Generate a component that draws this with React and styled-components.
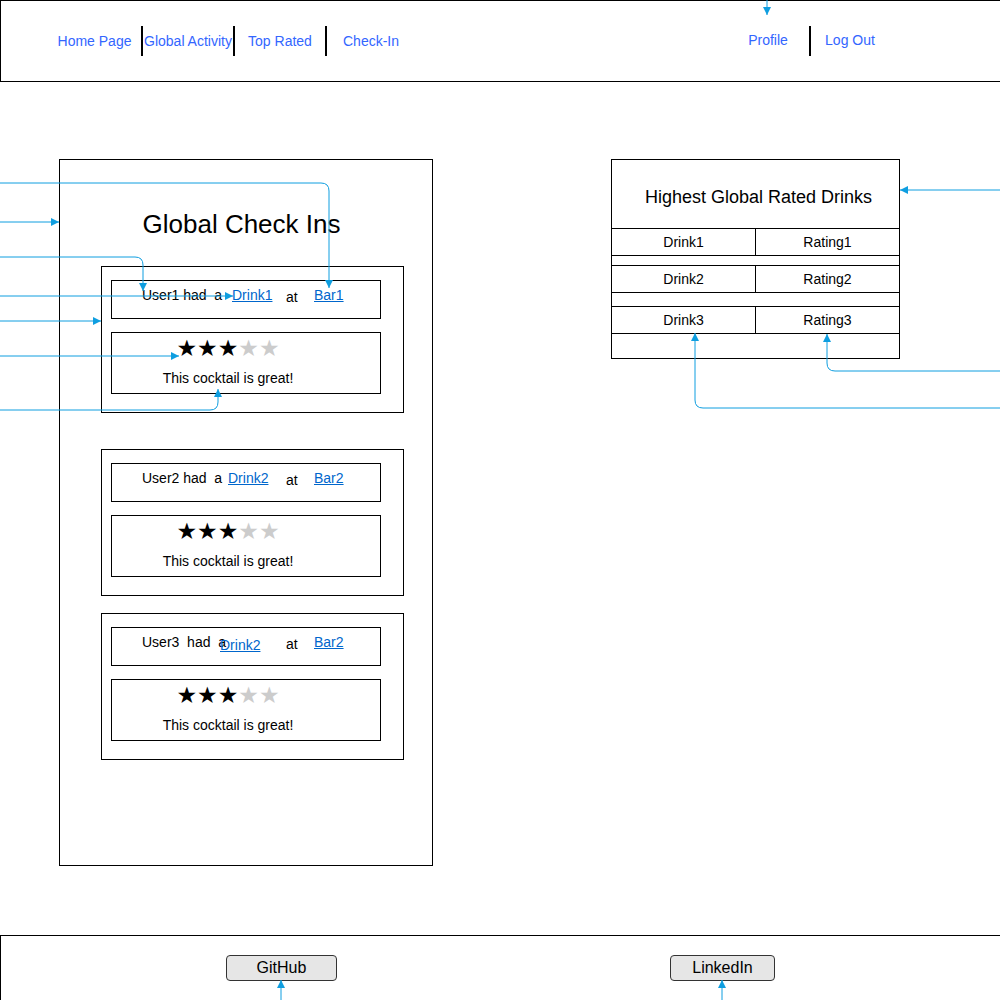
import React from 'react';
import styled, { createGlobalStyle } from 'styled-components';

const GlobalStyle = createGlobalStyle`
  body {
    margin: 0;
    font-family: "Liberation Sans", Arial, sans-serif;
    background: #ffffff;
    color: #000000;
  }
`;

const Page = styled.div`
  position: relative;
  width: 1000px;
  height: 1000px;
  overflow: hidden;
`;

const Header = styled.header`
  box-sizing: border-box;
  height: 82px;
  border: 1px solid #000;
  border-right: none;
  display: flex;
  align-items: center;
`;

const NavGroup = styled.nav`
  display: flex;
  align-items: center;
  padding-left: ${p => p.$left || 0}px;
  padding-right: ${p => p.$right || 0}px;
  margin-left: ${p => (p.$push ? 'auto' : '0')};
`;

const NavLink = styled.a`
  width: ${p => p.$w}px;
  text-align: center;
  font-size: 14px;
  color: #3366ff;
  text-decoration: none;
  white-space: nowrap;
  margin-top: ${p => p.$dy || 0}px;
`;

const NavSep = styled.span`
  width: 2px;
  height: 30px;
  background: #000;
`;

const Main = styled.main`
  box-sizing: border-box;
  height: 853px;
  display: flex;
  align-items: flex-start;
  padding: 77px 0 0 59px;
`;

const Panel = styled.section`
  box-sizing: border-box;
  width: 374px;
  height: 707px;
  border: 1px solid #000;
  padding: 49px 0 0 41px;
`;

const PanelTitle = styled.h1`
  margin: 0 0 27px;
  width: 281px;
  text-align: center;
  font-size: 26px;
  line-height: 30px;
  font-weight: 400;
  white-space: nowrap;
`;

const Card = styled.div`
  box-sizing: border-box;
  width: 303px;
  height: 147px;
  border: 1px solid #000;
  padding: 13px 0 0 9px;
  margin-bottom: ${p => p.$gap}px;
`;

const SentenceBox = styled.div`
  box-sizing: border-box;
  width: 270px;
  height: 39px;
  border: 1px solid #000;
  padding: 6px 0 0 30px;
  display: flex;
  align-items: flex-start;
  font-size: 14px;
  line-height: 16px;
  white-space: pre;
`;

const Word = styled.span`
  width: ${p => (p.$w ? `${p.$w}px` : 'auto')};
  flex-shrink: 0;
  margin-top: ${p => p.$dy || 0}px;
`;

const DrinkLink = styled.a`
  color: #0066cc;
  text-decoration: underline;
`;

const ReviewBox = styled.div`
  box-sizing: border-box;
  width: 270px;
  height: 62px;
  margin-top: 13px;
  border: 1px solid #000;
  padding: 2px 36px 0 0;
  display: flex;
  flex-direction: column;
  align-items: center;
`;

const Stars = styled.div`
  font-family: "DejaVu Sans", sans-serif;
  font-size: 23px;
  line-height: 27px;
  white-space: nowrap;
`;

const Star = styled.span`
  color: ${p => (p.$on ? '#000' : '#cccccc')};
`;

const Comment = styled.div`
  margin-top: 8px;
  font-size: 14px;
  line-height: 16px;
`;

const Table = styled.section`
  box-sizing: border-box;
  width: 289px;
  margin-left: 178px;
  border: 1px solid #000;
  display: flex;
  flex-direction: column;
`;

const TableTitle = styled.div`
  box-sizing: border-box;
  height: 69px;
  border-bottom: 1px solid #000;
  display: flex;
  align-items: center;
  justify-content: center;
  padding: 6px 0 0 6px;
  font-size: 18px;
`;

const TableRow = styled.div`
  height: 26px;
  border-bottom: 1px solid #000;
  display: grid;
  grid-template-columns: 144px 1fr;
  font-size: 14px;
`;

const Cell = styled.div`
  display: flex;
  align-items: center;
  justify-content: center;
  border-right: ${p => (p.$divider ? '1px solid #000' : 'none')};
`;

const Spacer = styled.div`
  height: ${p => p.$h}px;
  border-bottom: ${p => (p.$last ? 'none' : '1px solid #000')};
`;

const Footer = styled.footer`
  box-sizing: border-box;
  height: 65px;
  border-top: 1px solid #000;
  border-left: 1px solid #000;
  display: flex;
  align-items: flex-start;
  padding: 19px 0 0 225px;
`;

const FooterButton = styled.button`
  box-sizing: border-box;
  width: ${p => p.$w}px;
  height: 26px;
  margin-right: ${p => p.$gap || 0}px;
  border: 1px solid #333;
  border-radius: 4px;
  background: #e6e6e6;
  font-family: "Liberation Sans", Arial, sans-serif;
  font-size: 16px;
  color: #000;
  padding: 0;
`;

const Connectors = styled.svg`
  position: absolute;
  left: 0;
  top: 0;
  pointer-events: none;
`;

const checkIns = [
  { user: 'User1 had  a', userW: 90, drink: 'Drink1', drinkW: 54, drinkDy: 0, bar: 'Bar1', gap: 36 },
  { user: 'User2 had  a', userW: 86, drink: 'Drink2', drinkW: 58, drinkDy: 0, bar: 'Bar2', gap: 17 },
  { user: 'User3  had  a', userW: 78, drink: 'Drink2', drinkW: 66, drinkDy: 3, bar: 'Bar2', gap: 0 },
];

const topDrinks = [
  { drink: 'Drink1', rating: 'Rating1', after: 9 },
  { drink: 'Drink2', rating: 'Rating2', after: 13 },
  { drink: 'Drink3', rating: 'Rating3', after: 24, last: true },
];

const arrows = [
  'M0 183 H321 Q329 183 329 191 V288',
  'M0 222 H59',
  'M0 257 H135 Q143 257 143 265 V291',
  'M0 296 H233',
  'M0 321 H101',
  'M0 356 H179',
  'M0 410 H210 Q218 410 218 402 V389',
  'M1000 190 H900',
  'M1000 371 H835 Q827 371 827 363 V334',
  'M1000 408 H703 Q695 408 695 400 V333',
  'M767 0 V15',
  'M281 1000 V980',
  'M722 1000 V980',
];

const Rating = ({ value }) => (
  <Stars>
    {[1, 2, 3, 4, 5].map(n => (
      <Star key={n} $on={n <= value}>★</Star>
    ))}
  </Stars>
);

const App = () => {
  return (
    <Page>
      <GlobalStyle />
      <Header>
        <NavGroup $left={47}>
          <NavLink $w={93}>Home Page</NavLink>
          <NavSep />
          <NavLink $w={90}>Global Activity</NavLink>
          <NavSep />
          <NavLink $w={90}>Top Rated</NavLink>
          <NavSep />
          <NavLink $w={88}>Check-In</NavLink>
        </NavGroup>
        <NavGroup $push $right={111}>
          <NavLink $w={82} $dy={-2}>Profile</NavLink>
          <NavSep />
          <NavLink $w={78} $dy={-2}>Log Out</NavLink>
        </NavGroup>
      </Header>

      <Main>
        <Panel>
          <PanelTitle>Global Check Ins</PanelTitle>
          {checkIns.map(c => (
            <Card key={c.user} $gap={c.gap}>
              <SentenceBox>
                <Word $w={c.userW}>{c.user}</Word>
                <Word $w={c.drinkW} $dy={c.drinkDy}>
                  <DrinkLink>{c.drink}</DrinkLink>
                </Word>
                <Word $w={28} $dy={2}>at</Word>
                <Word>
                  <DrinkLink>{c.bar}</DrinkLink>
                </Word>
              </SentenceBox>
              <ReviewBox>
                <Rating value={3} />
                <Comment>This cocktail is great!</Comment>
              </ReviewBox>
            </Card>
          ))}
        </Panel>

        <Table>
          <TableTitle>Highest Global Rated Drinks</TableTitle>
          {topDrinks.map(row => (
            <React.Fragment key={row.drink}>
              <TableRow>
                <Cell $divider>{row.drink}</Cell>
                <Cell>{row.rating}</Cell>
              </TableRow>
              <Spacer $h={row.after} $last={row.last} />
            </React.Fragment>
          ))}
        </Table>
      </Main>

      <Footer>
        <FooterButton $w={111} $gap={333}>GitHub</FooterButton>
        <FooterButton $w={105}>LinkedIn</FooterButton>
      </Footer>

      <Connectors width="1000" height="1000" viewBox="0 0 1000 1000">
        <defs>
          <marker
            id="tip"
            markerUnits="userSpaceOnUse"
            markerWidth="9"
            markerHeight="8"
            refX="8"
            refY="4"
            orient="auto"
          >
            <path d="M0 0 L8 4 L0 8 Z" fill="#0f9ee0" />
          </marker>
        </defs>
        {arrows.map(d => (
          <path key={d} d={d} fill="none" stroke="#0f9ee0" strokeWidth="1" markerEnd="url(#tip)" />
        ))}
      </Connectors>
    </Page>
  );
};

export default App;
